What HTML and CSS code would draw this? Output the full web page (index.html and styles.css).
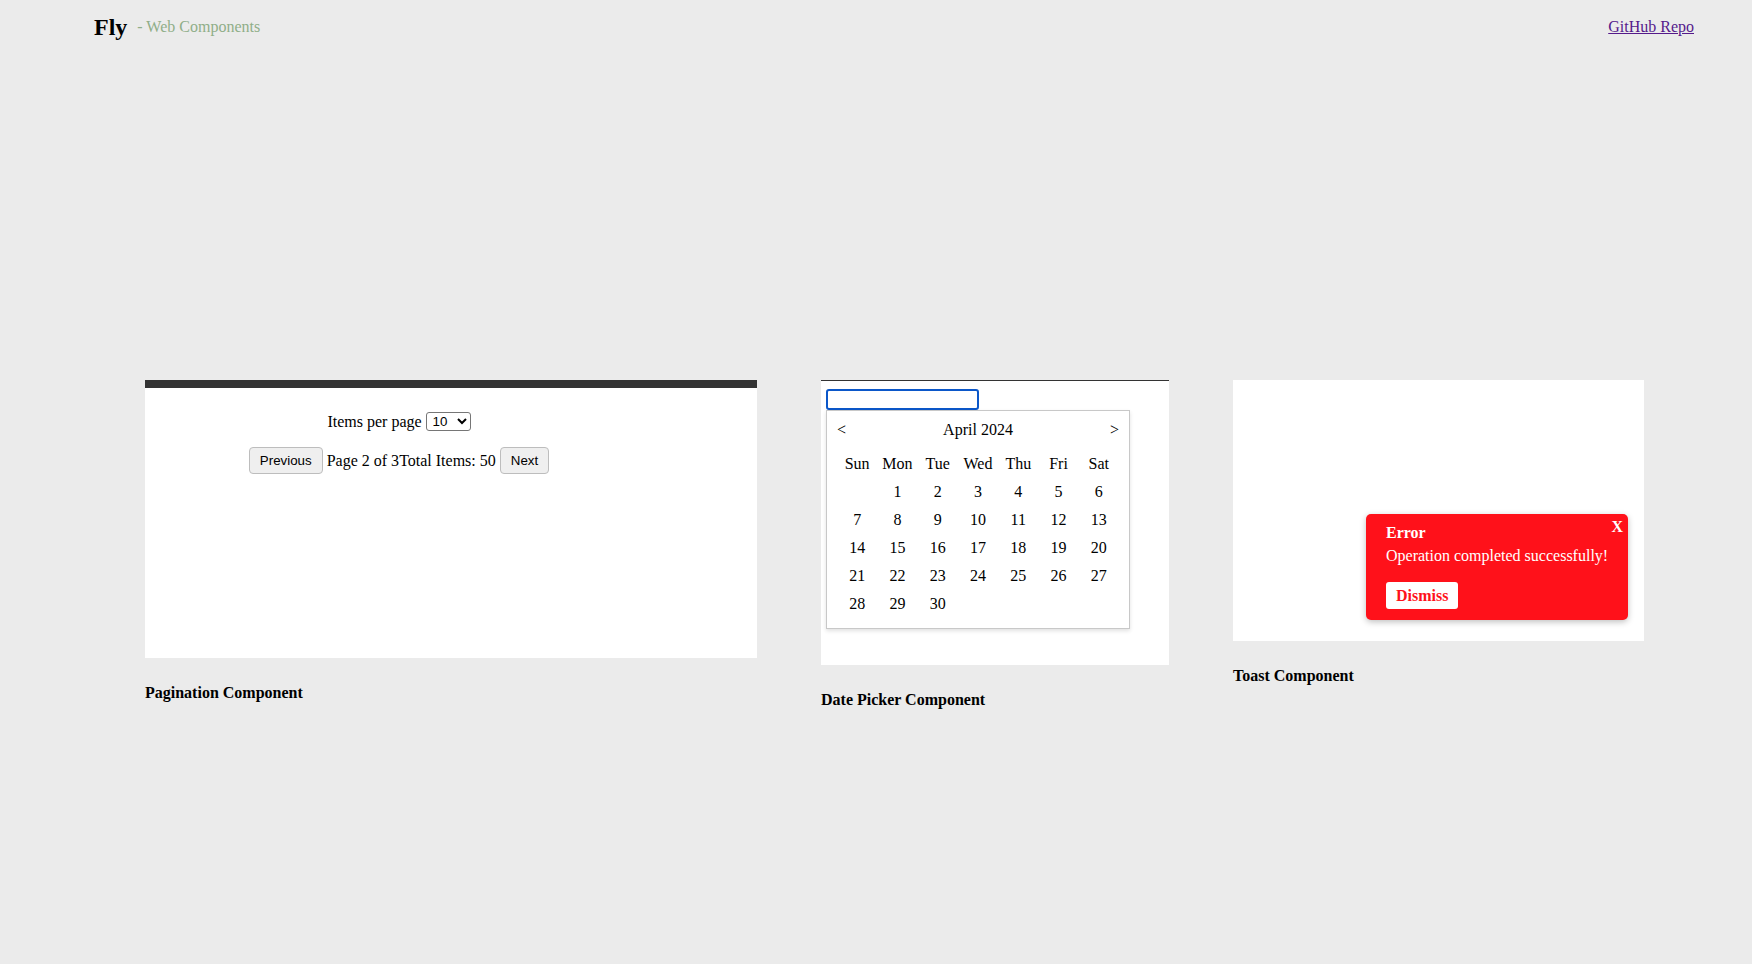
FILE: index.html
```html
<!DOCTYPE html>
<html lang="en">
<head>
<meta charset="utf-8">
<title>Fly - Web Components</title>
<link rel="stylesheet" href="styles.css">
</head>
<body>
<header class="topbar">
  <div class="brand">
    <span class="brand-name">Fly</span>
    <span class="brand-sub">- Web Components</span>
  </div>
  <a class="repo-link" href="#">GitHub Repo</a>
</header>

<main class="showcase">
  <section class="demo demo-pagination">
    <div class="card card-pagination">
      <div class="pager">
        <div class="pager-size">
          <span>Items per page</span>
          <select class="pager-select">
            <option selected>10</option>
            <option>20</option>
            <option>50</option>
          </select>
        </div>
        <div class="pager-nav">
          <button class="btn">Previous</button>
          <span class="pager-info"><span>Page 2 of 3</span><span>Total Items: 50</span></span>
          <button class="btn">Next</button>
        </div>
      </div>
    </div>
    <h3 class="demo-title">Pagination Component</h3>
  </section>

  <section class="demo demo-date">
    <div class="card card-date">
      <input class="date-input" type="text">
      <div class="calendar">
        <div class="cal-head">
          <span class="cal-arrow">&lt;</span>
          <span class="cal-month">April 2024</span>
          <span class="cal-arrow">&gt;</span>
        </div>
        <div class="cal-grid">
          <span>Sun</span><span>Mon</span><span>Tue</span><span>Wed</span><span>Thu</span><span>Fri</span><span>Sat</span>
          <span></span><span>1</span><span>2</span><span>3</span><span>4</span><span>5</span><span>6</span>
          <span>7</span><span>8</span><span>9</span><span>10</span><span>11</span><span>12</span><span>13</span>
          <span>14</span><span>15</span><span>16</span><span>17</span><span>18</span><span>19</span><span>20</span>
          <span>21</span><span>22</span><span>23</span><span>24</span><span>25</span><span>26</span><span>27</span>
          <span>28</span><span>29</span><span>30</span><span></span><span></span><span></span><span></span>
        </div>
      </div>
    </div>
    <h3 class="demo-title">Date Picker Component</h3>
  </section>

  <section class="demo demo-toast">
    <div class="card card-toast">
      <div class="toast">
        <span class="toast-close">X</span>
        <div class="toast-title">Error</div>
        <div class="toast-msg">Operation completed successfully!</div>
        <button class="toast-btn">Dismiss</button>
      </div>
    </div>
    <h3 class="demo-title">Toast Component</h3>
  </section>
</main>
</body>
</html>
```

FILE: styles.css
```css
html, body {
  margin: 0;
  padding: 0;
}

body {
  background: #ebebeb;
  font-family: "Liberation Serif", "Times New Roman", serif;
  font-size: 16px;
  color: #000;
}

.topbar {
  height: 54px;
  box-sizing: border-box;
  padding: 0 58px 0 94px;
  display: flex;
  align-items: center;
  justify-content: space-between;
}

.brand {
  display: flex;
  align-items: center;
  gap: 10px;
}

.brand-name {
  font-size: 24px;
  font-weight: bold;
}

.brand-sub {
  color: #8fae88;
  font-size: 16px;
}

.repo-link {
  color: #551a8b;
  text-decoration: underline;
  font-size: 16px;
}

.showcase {
  display: flex;
  align-items: flex-start;
  gap: 64px;
  padding: 326px 0 0 145px;
}

.demo {
  display: flex;
  flex-direction: column;
}

.demo-pagination { width: 612px; }
.demo-date { width: 348px; }
.demo-toast { width: 411px; }

.card {
  background: #fff;
  box-sizing: border-box;
}

.demo-title {
  margin: 26px 0 0 0;
  font-size: 16px;
  font-weight: bold;
  line-height: 18px;
}

/* Pagination */
.card-pagination {
  height: 278px;
  border-top: 8px solid #333;
}

.pager {
  width: 508px;
  padding-top: 24px;
  display: flex;
  flex-direction: column;
  align-items: center;
  gap: 16px;
}

.pager-size,
.pager-nav {
  display: flex;
  align-items: center;
  gap: 4px;
}

.pager-select {
  font-family: "Liberation Sans", Arial, sans-serif;
  font-size: 13.33px;
  height: 19px;
  width: 45px;
  padding: 0 0 0 2px;
  border: 1px solid #767676;
  border-radius: 3px;
  background: #fff;
  color: #000;
}

.btn {
  font-family: "Liberation Sans", Arial, sans-serif;
  font-size: 13.33px;
  line-height: 15px;
  padding: 5px 10px;
  background: #efefef;
  border: 1px solid #bdbdbd;
  border-radius: 4px;
  color: #000;
}

/* Date picker */
.card-date {
  border-top: 1px solid #333;
  padding: 8px 5px 36px 5px;
}

.date-input {
  display: block;
  width: 153px;
  height: 21px;
  box-sizing: border-box;
  margin: 0;
  border: 2px solid #0b57c9;
  border-radius: 3px;
  outline: none;
  background: #fff;
}

.calendar {
  width: 304px;
  box-sizing: border-box;
  border: 1px solid #c8c8c8;
  box-shadow: 0 2px 4px rgba(0, 0, 0, 0.12);
  padding: 10px;
  background: #fff;
}

.cal-head {
  display: flex;
  justify-content: space-between;
  align-items: center;
  height: 18px;
  margin-bottom: 11px;
}

.cal-grid {
  display: grid;
  grid-template-columns: repeat(7, 1fr);
  grid-auto-rows: 28px;
  align-items: center;
  justify-items: center;
}

/* Toast */
.card-toast {
  position: relative;
  height: 261px;
}

.toast {
  position: absolute;
  right: 16px;
  bottom: 21px;
  width: 262px;
  box-sizing: border-box;
  padding: 10px 10px 11px 20px;
  background: #ff111a;
  color: #fff;
  border-radius: 5px;
  box-shadow: 0 2px 6px rgba(0, 0, 0, 0.25);
}

.toast-close {
  position: absolute;
  top: 4px;
  right: 5px;
  font-weight: bold;
  font-size: 16px;
  line-height: 18px;
}

.toast-title {
  font-weight: bold;
  line-height: 18px;
}

.toast-msg {
  margin-top: 5px;
  line-height: 18px;
  white-space: nowrap;
}

.toast-btn {
  margin-top: 17px;
  display: block;
  font-family: "Liberation Serif", "Times New Roman", serif;
  font-size: 16px;
  font-weight: bold;
  line-height: 19px;
  padding: 4px 10px;
  border: none;
  border-radius: 3px;
  background: #fff;
  color: #ff111a;
}
```
